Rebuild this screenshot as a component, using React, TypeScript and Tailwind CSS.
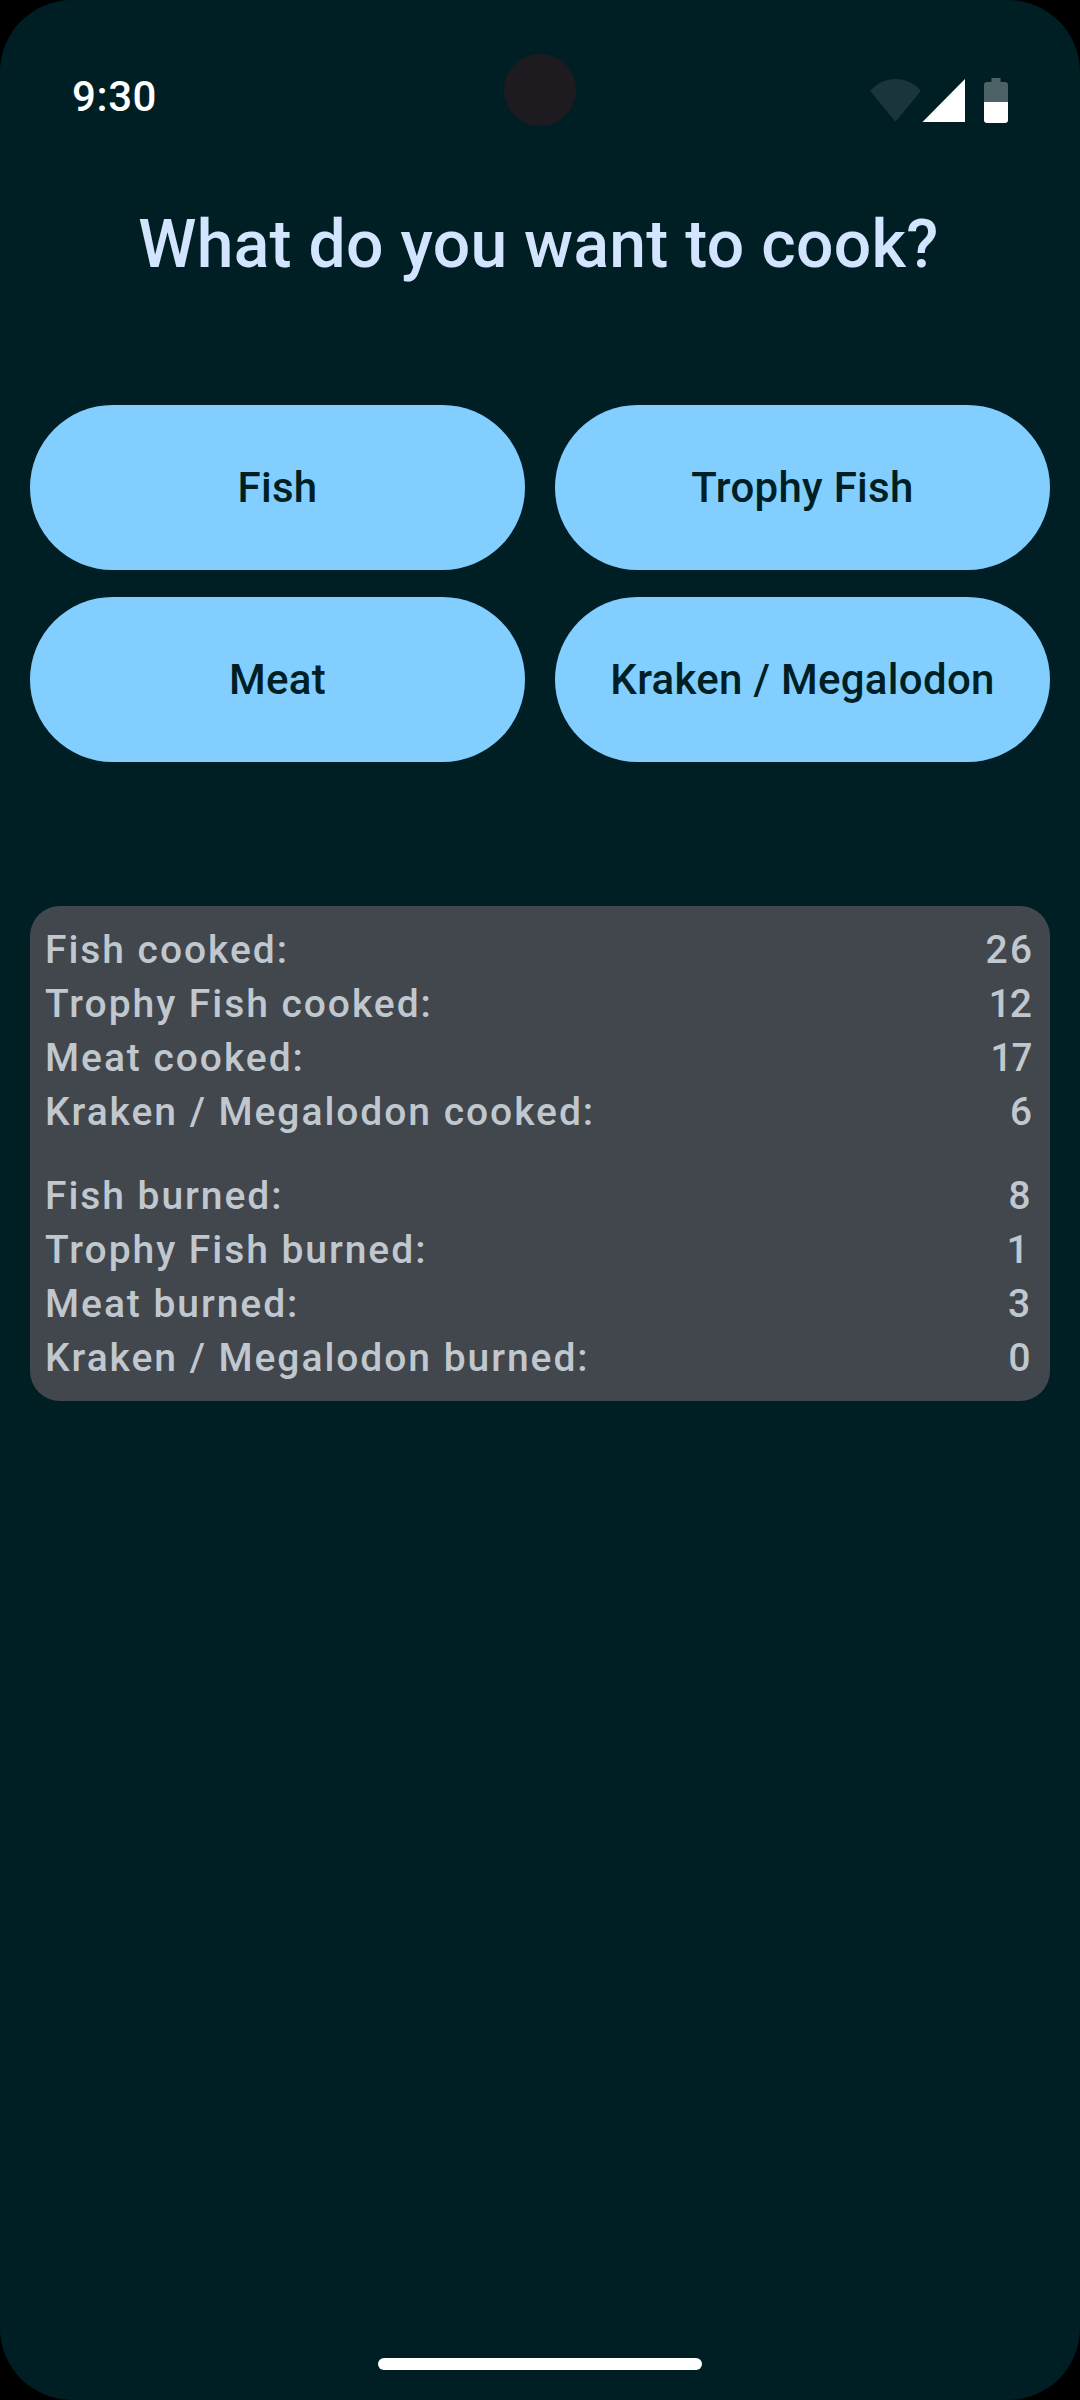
const stats = [
  {
    align: "pr-px text-right",
    rows: [
      { label: "Fish cooked:", value: 26 },
      { label: "Trophy Fish cooked:", value: 12 },
      { label: "Meat cooked:", value: 17 },
      { label: "Kraken / Megalodon cooked:", value: 6 },
    ],
  },
  {
    align: "w-[27px] text-left",
    rows: [
      { label: "Fish burned:", value: 8 },
      { label: "Trophy Fish burned:", value: 1 },
      { label: "Meat burned:", value: 3 },
      { label: "Kraken / Megalodon burned:", value: 0 },
    ],
  },
];

const foods = ["Fish", "Trophy Fish", "Meat", "Kraken / Megalodon"];

const StatusBar = () => (
  <header className="relative flex h-[136px] w-full shrink-0 items-start justify-between pr-[71px] pl-[72px] text-white">
    <span className="mt-[72px] text-[42px] leading-[50px] font-medium tracking-[0.6px]">
      9:30
    </span>
    {/* Camera cutout */}
    <div className="absolute top-[54px] left-1/2 size-[72px] -translate-x-1/2 rounded-full bg-[#1d1b20]" />
    <svg className="mt-[76px]" width="140" height="48" viewBox="0 0 140 48" fill="currentColor">
      <path d="M1.2 15A32.5 32.5 0 0 1 51.8 15L26.5 45.8Z" fillOpacity="0.1" />
      <path d="M53.5 46L96 3V46Z" />
      <path d="M122.5 2H131.5V6H136Q139 6 139 9V26H115V9Q115 6 118 6H122.5Z" fillOpacity="0.3" />
      <path d="M115 26H139V44Q139 47 136 47H118Q115 47 115 44Z" />
    </svg>
  </header>
);

export default function App() {
  return (
    <div className="h-[2400px] w-[1080px] bg-black font-[Roboto,sans-serif]">
      <div className="flex h-full w-full flex-col items-center overflow-hidden rounded-[72px] bg-[#001f25]">
        <StatusBar />
        <h1 className="mt-[65px] pr-[3px] text-[66px] leading-[88px] font-medium tracking-[0.3px] text-[#d3e4ff]">
          What do you want to cook?
        </h1>

        <main className="mt-[116px] w-full px-[30px]">
          <div className="grid grid-cols-2 gap-x-[30px] gap-y-[27px]">
            {foods.map((food) => (
              <button
                key={food}
                className="h-[165px] rounded-full bg-[#82cfff] text-[42px] font-medium tracking-[0.3px] text-[#001f25]"
              >
                {food}
              </button>
            ))}
          </div>

          <div className="mt-[144px] flex h-[495px] flex-col gap-[30px] rounded-[30px] bg-[#41474d] px-[15px] pt-[17px] text-[39px] leading-[54px] font-medium tracking-[1.95px] text-[#c1c7ce]">
            {stats.map(({ align, rows }) => (
              <dl key={align}>
                {rows.map(({ label, value }) => (
                  <div key={label} className="flex justify-between">
                    <dt>{label}</dt>
                    <dd className={`proportional-nums ${align}`}>{value}</dd>
                  </div>
                ))}
              </dl>
            ))}
          </div>
        </main>

        {/* Home gesture bar */}
        <div className="mt-auto mb-[30px] h-[12px] w-[324px] rounded-full bg-white" />
      </div>
    </div>
  );
}
